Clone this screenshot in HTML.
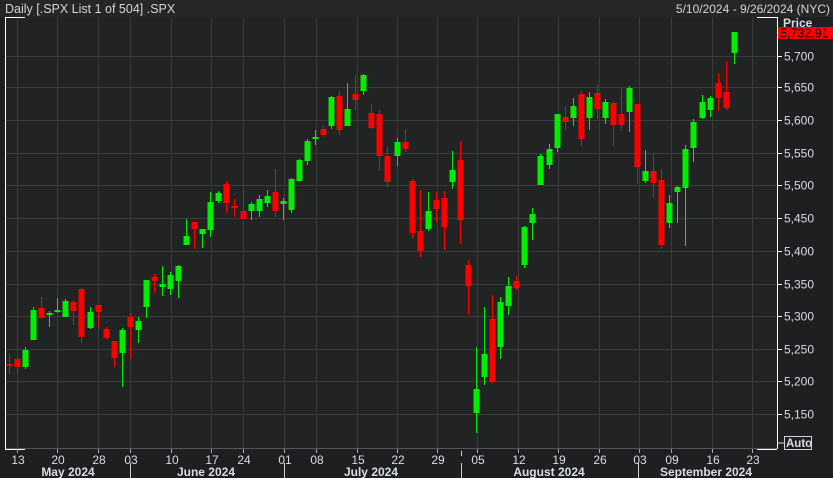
<!DOCTYPE html>
<html><head><meta charset="utf-8"><style>
body{margin:0;width:833px;height:478px;background:#1f1f21;overflow:hidden;font-family:"Liberation Sans Narrow","Liberation Sans",sans-serif;}
svg{display:block}
</style></head><body>
<svg id="s" width="833" height="478" xmlns="http://www.w3.org/2000/svg" font-family="Liberation Sans Narrow, Liberation Sans, sans-serif">
<rect x="0" y="0" width="833" height="17" fill="#262626"/>
<rect x="5" y="17" width="772" height="432" fill="#222323"/>
<text x="5" y="13" fill="#d4d4d4" font-size="12.5">Daily [.SPX List 1 of 504] .SPX</text>
<text x="830" y="13" fill="#d4d4d4" font-size="12" text-anchor="end">5/10/2024 - 9/26/2024 (NYC)</text>
<g id="grid" stroke="#3a3b3b" stroke-width="1"></g>
<g id="c"></g>
<line x1="5" y1="448.5" x2="777" y2="448.5" stroke="#555"/>
<line x1="5.5" y1="17" x2="5.5" y2="449" stroke="#fff"/>
<line x1="777.5" y1="17" x2="777.5" y2="449" stroke="#fff"/>
<line x1="5" y1="17.5" x2="25" y2="17.5" stroke="#fff"/>
<line x1="757" y1="17.5" x2="777" y2="17.5" stroke="#fff"/>
<line x1="5" y1="449.5" x2="25" y2="449.5" stroke="#fff"/>
<line x1="757" y1="449.5" x2="777" y2="449.5" stroke="#fff"/>
<g id="ax" fill="#d8dce4" font-size="12"></g>
<text x="783" y="27" fill="#d8dce4" font-size="12" font-weight="bold">Price</text>
<rect x="778" y="27" width="55" height="12" fill="#ff0000"/>
<text x="780" y="37.5" fill="#000" font-size="12.5">5,732.91</text>
<rect x="784.5" y="436.5" width="27" height="13" fill="none" stroke="#cfd3da"/>
<text x="786" y="447" fill="#d8dce4" font-size="11.5" font-weight="bold">Auto</text>
<line x1="778" y1="443" x2="784" y2="443" stroke="#cfd3da"/>
</svg>
<script>
var NS="http://www.w3.org/2000/svg";
function el(p,t,a,txt){var e=document.createElementNS(NS,t);for(var k in a)e.setAttribute(k,a[k]);if(txt)e.textContent=txt;p.appendChild(e);return e;}
var g=document.getElementById('grid'),ax=document.getElementById('ax'),c=document.getElementById('c');
var prices=[[5700,56],[5650,87],[5600,120],[5550,153],[5500,185],[5450,218],[5400,251],[5350,284],[5300,316],[5250,349],[5200,381],[5150,414]];
prices.forEach(function(p){el(g,'line',{x1:5,x2:777,y1:p[1]+.5,y2:p[1]+.5});el(ax,'line',{x1:777,x2:782,y1:p[1]+.5,y2:p[1]+.5,stroke:'#fff'});
el(ax,'text',{x:784,y:p[1]+4.5},p[0].toLocaleString('en-US'));});
var ticks=[[17,'13'],[57,'20'],[98,'28'],[130,'03'],[171,'10'],[211,'17'],[243,'24'],[284,'01'],[316,'08'],[357,'15'],[397,'22'],[437,'29'],[477,'05'],[518,'12'],[558,'19'],[599,'26'],[639,'03'],[671,'09'],[712,'16'],[752,'23']];
ticks.forEach(function(t){el(g,'line',{x1:t[0]+.5,x2:t[0]+.5,y1:17,y2:449});el(ax,'line',{x1:t[0]+.5,x2:t[0]+.5,y1:449,y2:453,stroke:'#aaa'});
el(ax,'text',{x:t[0]+1,y:464,'text-anchor':'middle'},t[1]);});
[130,284,461,638].forEach(function(x){el(ax,'line',{x1:x+.5,x2:x+.5,y1:463,y2:478,stroke:'#ccc'});});
el(ax,'line',{x1:461.5,x2:461.5,y1:451,y2:456,stroke:'#ccc'});
[[68,'May 2024'],[206,'June 2024'],[371,'July 2024'],[549,'August 2024'],[706,'September 2024']].forEach(function(m){
el(ax,'text',{x:m[0],y:476,'text-anchor':'middle','font-weight':'bold'},m[1]);});
// x, wickTop, wickBot, bodyTop, bodyBot, green?
var d=[[9,354,374,364,366,0],[17,357,373,359,367,0],[25,347,369,350,367,1],[33,307,340,310,340,1],[41,297,318,308,318,0],[49,311,327,313,314,1],[57,298,313,310,312,1],[65,299,317,301,317,1],[73,300,325,302,311,0],[81,288,343,289,337,0],[90,307,329,312,328,1],[98,305,328,305,312,0],[106,327,339,329,338,0],[114,341,367,341,358,0],[122,328,387,330,353,1],[130,313,359,317,327,0],[138,317,343,321,330,1],[146,280,318,280,307,1],[154,274,293,277,281,0],[162,266,296,284,287,1],[170,272,295,275,289,1],[178,265,298,266,281,1],[186,219,245,236,245,1],[194,222,249,222,229,0],[202,229,248,229,234,1],[210,192,237,202,230,1],[218,191,203,193,201,1],[226,181,213,184,203,0],[234,199,217,206,208,0],[243,190,219,211,219,0],[251,202,220,204,211,1],[259,195,217,199,211,1],[267,190,207,196,203,1],[275,169,217,192,211,0],
[283,198,220,201,204,1],[291,178,213,179,210,1],[299,159,181,160,181,1],[307,139,165,141,161,1],[315,130,145,137,138,1],[323,125,137,129,135,0],[331,96,129,97,126,1],[339,91,135,96,130,0],[347,83,126,109,126,1],[355,75,110,94,100,0],[363,74,95,75,91,1],[371,104,129,113,128,0],[379,110,171,114,156,0],[387,147,187,156,182,0],[397,138,166,142,156,1],[405,129,152,142,149,0],[412,179,238,181,233,0],[420,190,257,231,251,0],[428,192,231,211,229,1],[436,192,222,200,209,0],[444,191,250,198,227,0],[452,151,189,170,182,1],[460,141,244,160,220,0],[468,260,315,265,286,0],[476,347,433,389,413,1],[484,307,385,354,377,1],[492,295,383,319,382,0],[500,297,359,302,347,1],[508,277,315,286,306,1],
[516,276,290,281,288,0],[524,226,268,227,265,1],[532,208,240,214,223,1],[540,154,185,156,185,1],[549,144,169,149,165,1],[557,114,152,114,148,1],[565,106,130,117,122,0],[573,98,126,106,118,1],[581,91,146,94,139,0],[589,92,130,97,118,1],[597,84,119,93,109,0],[605,99,124,102,118,1],[613,101,146,103,125,0],[621,88,131,114,125,0],[629,86,132,88,112,1],[637,104,184,104,167,0],[645,150,183,171,181,1],[653,154,198,171,183,0],[661,169,249,180,245,0],[669,195,228,203,223,1],[677,186,223,187,192,1],[685,145,246,149,188,1],[693,119,162,122,148,1],[702,95,119,102,118,1],[710,96,117,98,110,1],[718,73,111,83,98,0],[726,61,110,92,108,0],[734,32,64,32,53,1]];
d.forEach(function(k){var col=k[5]?'#00ee00':'#ff0000';
el(c,'rect',{x:k[0],y:k[1],width:1,height:k[2]-k[1],fill:col});
el(c,'rect',{x:k[0]-2.5,y:k[3],width:6,height:Math.max(2,k[4]-k[3]),fill:col});});
</script>
</body></html>
